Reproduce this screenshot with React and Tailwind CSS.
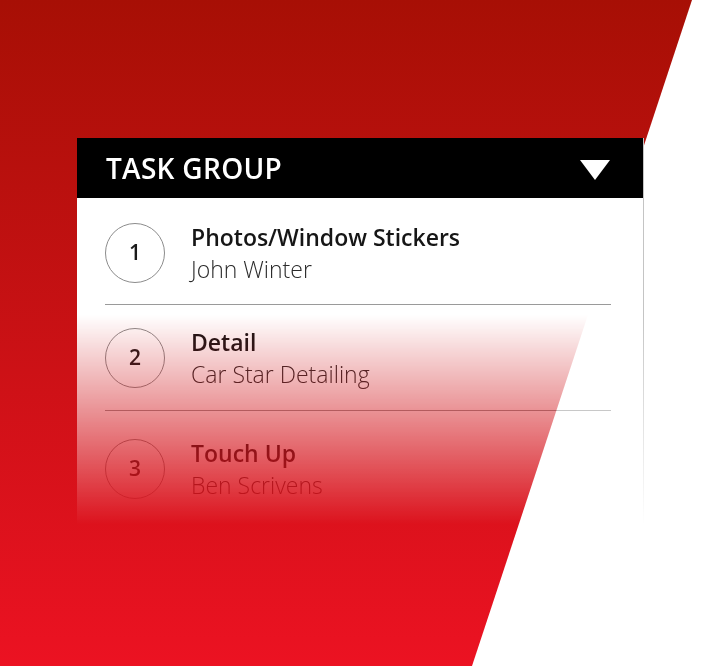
import React from 'react';

const tasks = [
  { n: 1, title: 'Photos/Window Stickers', who: 'John Winter', pad: 'pt-[23px] pb-[19px] border-b' },
  { n: 2, title: 'Detail', who: 'Car Star Detailing', pad: 'pt-[21px] pb-[20px] border-b' },
  { n: 3, title: 'Touch Up', who: 'Ben Scrivens', pad: 'pt-[26px] pb-[19px]' },
];

function TaskRow({ task }) {
  return (
    <div className={`flex items-center gap-[26px] border-[#9a9a9a] ${task.pad}`}>
      <div className="w-[60px] h-[60px] shrink-0 rounded-full border border-[#8c8c8c] flex items-center justify-center text-[21px] font-semibold text-[#1a1a1a]">
        {task.n}
      </div>
      <div className="flex flex-col">
        <span className="text-[23px] leading-[32px] font-semibold text-[#161616]">{task.title}</span>
        <span className="text-[23px] leading-[32px] font-light text-[#2a2a2a]">{task.who}</span>
      </div>
    </div>
  );
}

export default function App() {
  return (
    <div
      className="relative w-[702px] h-[666px] overflow-hidden bg-white"
      style={{ fontFamily: '"Open Sans", "Noto Sans", sans-serif' }}
    >
      {/* red slanted backdrop */}
      <div className="absolute inset-0 bg-gradient-to-b from-[#a70f05] to-[#ec1222] [clip-path:polygon(0_0,692px_0,472px_100%,0_100%)]" />

      <div className="relative pt-[138px] pl-[77px]">
        <div className="w-[567px] h-[390px] bg-white border-r border-[#c4c4c4] [mask-image:linear-gradient(to_bottom,black_177px,transparent_387px)]">
          <div className="h-[60px] bg-black flex items-center justify-between pl-[29px] pr-[33px]">
            <span className="text-[28px] font-semibold text-white tracking-[0.3px]">TASK GROUP</span>
            <svg width="30" height="20" viewBox="0 0 30 20" className="mt-[4px]">
              <polygon points="0,0 30,0 15,20" fill="white" />
            </svg>
          </div>
          <div className="pl-[28px] pr-[32px]">
            {tasks.map((t) => (
              <TaskRow key={t.n} task={t} />
            ))}
          </div>
        </div>
      </div>
    </div>
  );
}
